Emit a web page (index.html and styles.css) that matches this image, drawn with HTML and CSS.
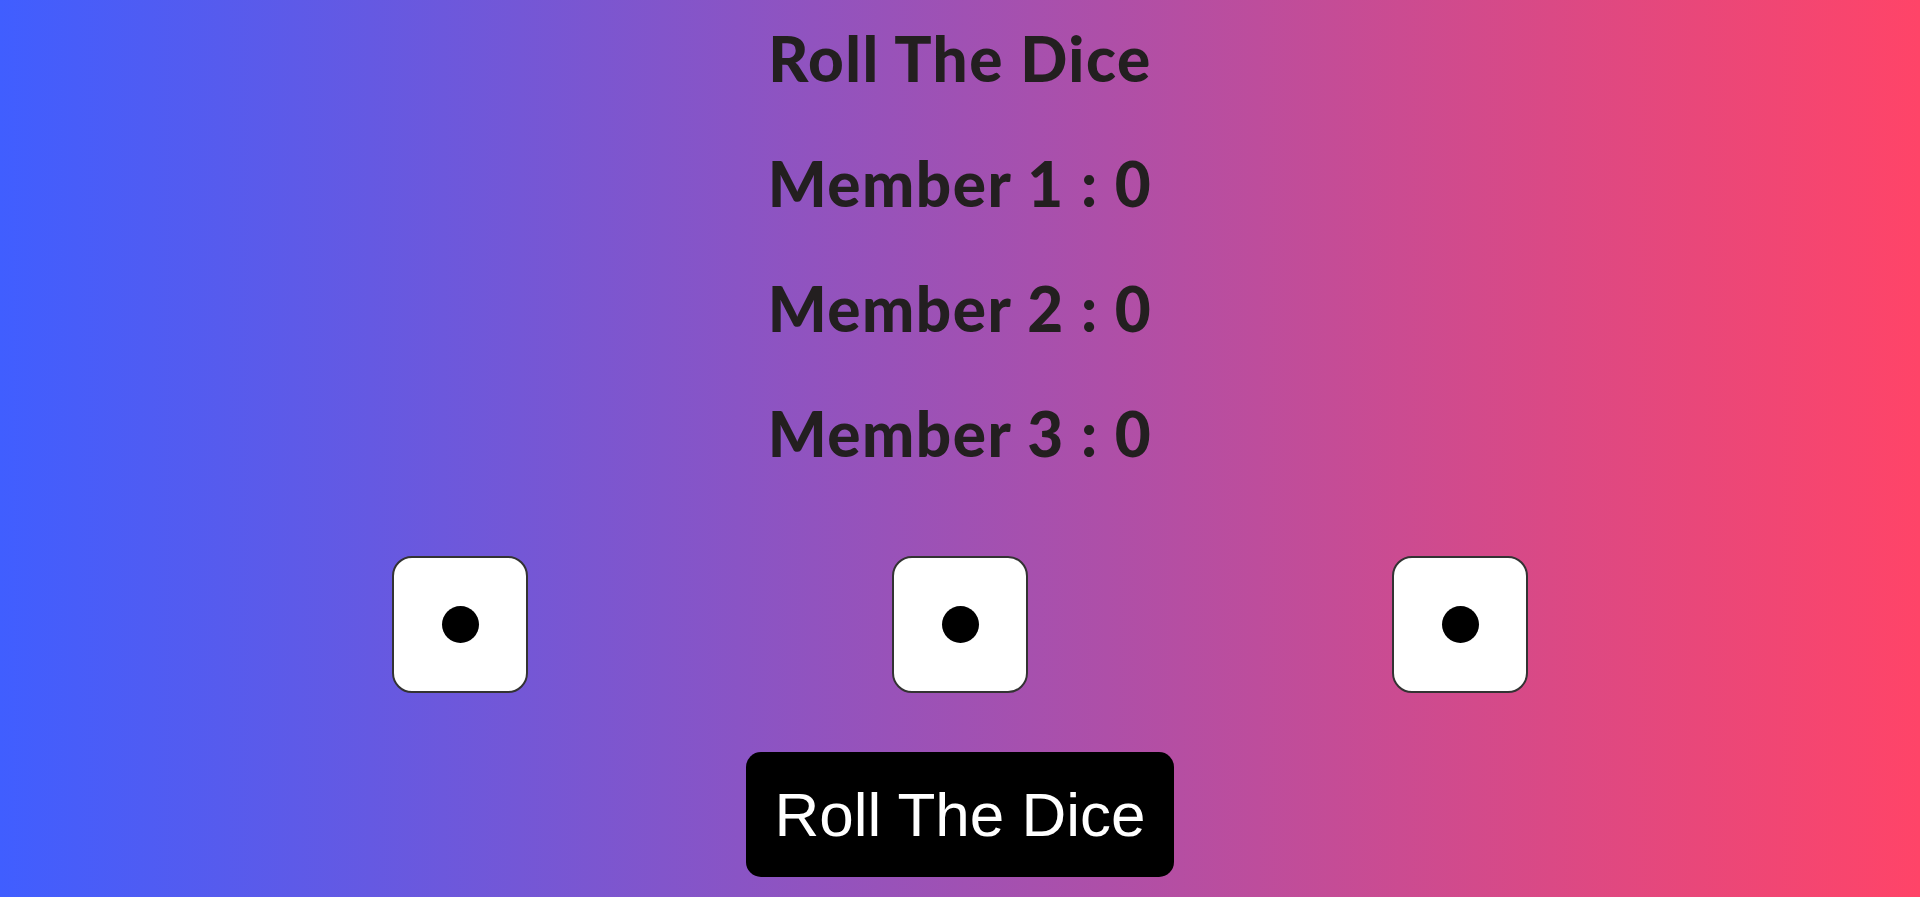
FILE: index.html
```html
<!DOCTYPE html>
<html lang="en">
<head>
<meta charset="utf-8">
<title>Roll The Dice</title>
<link rel="stylesheet" href="styles.css">
</head>
<body>
  <main class="page">
    <section class="scores">
      <h1 class="line">Roll The Dice</h1>
      <h2 class="line">Member 1 : 0</h2>
      <h2 class="line">Member 2 : 0</h2>
      <h2 class="line">Member 3 : 0</h2>
    </section>
    <section class="dice">
      <div class="cell"><div class="die"><span class="pip"></span></div></div>
      <div class="cell"><div class="die"><span class="pip"></span></div></div>
      <div class="cell"><div class="die"><span class="pip"></span></div></div>
    </section>
    <div class="actions">
      <button class="roll" type="button">Roll The Dice</button>
    </div>
  </main>
</body>
</html>
```
FILE: styles.css
```css
* { box-sizing: border-box; }
html, body { margin: 0; padding: 0; }
body {
  min-height: 897px;
  background: linear-gradient(to right, #405eff, #ff4468);
  font-family: "Lato", "Open Sans", sans-serif;
  color: #231f20;
}
.page {
  display: flex;
  flex-direction: column;
  align-items: center;
  padding-top: 21px;
}
.scores {
  display: flex;
  flex-direction: column;
  align-items: center;
  gap: 50px;
}
.line {
  margin: 0;
  font-size: 62px;
  line-height: 75px;
  font-weight: 900;
  letter-spacing: 1.5px;
}
.dice {
  display: grid;
  grid-template-columns: repeat(3, 500px);
  margin-top: 85px;
}
.cell {
  display: flex;
  justify-content: center;
}
.die {
  width: 136px;
  height: 137px;
  background: #fff;
  border: 2px solid #333;
  border-radius: 20px;
  display: flex;
  align-items: center;
  justify-content: center;
}
.pip {
  width: 37px;
  height: 37px;
  border-radius: 50%;
  background: #000;
}
.actions {
  margin-top: 59px;
}
.roll {
  background: #000;
  color: #fff;
  border: none;
  border-radius: 15px;
  font-family: "Liberation Sans", Arial, sans-serif;
  font-size: 62px;
  line-height: 71px;
  padding: 27px 28px;
  cursor: pointer;
}
```
